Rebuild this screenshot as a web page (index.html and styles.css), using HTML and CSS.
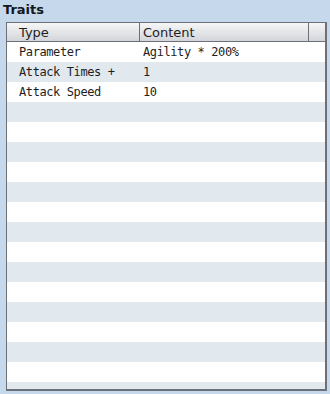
FILE: index.html
```html
<!DOCTYPE html>
<html>
<head>
<meta charset="utf-8">
<link rel="stylesheet" href="styles.css">
</head>
<body>
<div class="title">Traits</div>
<div class="panel">
  <div class="head">
    <div class="hcell c1">Type</div>
    <div class="hcell c2">Content</div>
    <div class="hcell c3"></div>
  </div>
  <div class="rows">
    <div class="row"><span class="c1">Parameter</span><span class="c2">Agility * 200%</span></div>
    <div class="row alt"><span class="c1">Attack Times +</span><span class="c2">1</span></div>
    <div class="row"><span class="c1">Attack Speed</span><span class="c2">10</span></div>
    <div class="row alt"></div>
    <div class="row"></div>
    <div class="row alt"></div>
    <div class="row"></div>
    <div class="row alt"></div>
    <div class="row"></div>
    <div class="row alt"></div>
    <div class="row"></div>
    <div class="row alt"></div>
    <div class="row"></div>
    <div class="row alt"></div>
    <div class="row"></div>
    <div class="row alt"></div>
    <div class="row"></div>
    <div class="row alt"></div>
  </div>
</div>
</body>
</html>
```
FILE: styles.css
```css
html, body {
  margin: 0;
  padding: 0;
}
body {
  width: 330px;
  height: 394px;
  background: #c6d8ec;
  font-family: "DejaVu Sans", sans-serif;
  color: #1e1e1e;
  overflow: hidden;
}
.title {
  height: 22px;
  padding-left: 3px;
  font-weight: bold;
  font-size: 13px;
  line-height: 19px;
  color: #101820;
}
.panel {
  margin-left: 6px;
  width: 318px;
  height: 366px;
  border: 1px solid #6c7078;
  border-right-width: 2px;
  border-bottom-width: 2px;
  background: #ffffff;
  overflow: hidden;
}
.head {
  display: flex;
  height: 18px;
  border-bottom: 1px solid #6c7078;
  background: linear-gradient(#f6f6f6, #d2d5da);
}
.hcell {
  font-size: 13px;
  line-height: 19px;
  border-right: 1px solid #6c7078;
  box-sizing: border-box;
}
.head .c1 { width: 133px; padding-left: 12px; }
.head .c2 { width: 169px; padding-left: 3px; }
.head .c3 { flex: 1; border-right: none; }
.row {
  display: flex;
  height: 20px;
  font-family: "DejaVu Sans Mono", monospace;
  font-size: 12px;
  letter-spacing: -0.4px;
  line-height: 20px;
  background: #ffffff;
}
.row.alt { background: #e1e9ee; }
.row .c1 { width: 133px; padding-left: 12px; box-sizing: border-box; }
.row .c2 { padding-left: 3px; }
```
